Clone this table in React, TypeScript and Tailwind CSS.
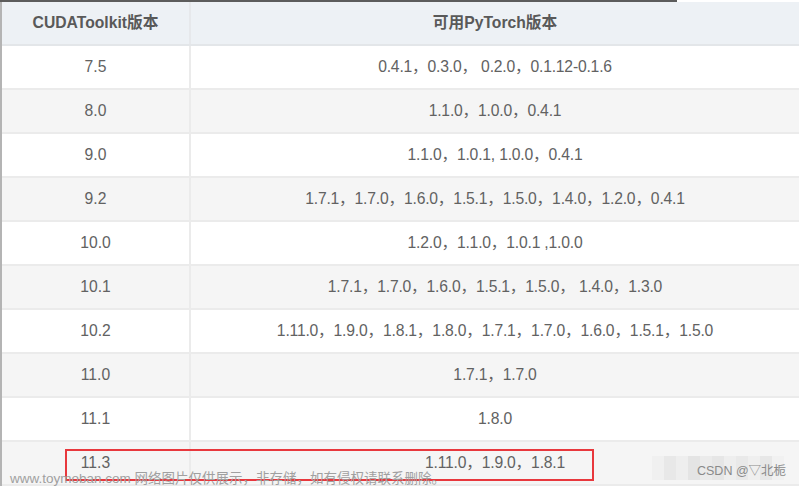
import React from "react";

const rows: { cuda: string; torch: string }[] = [
  { cuda: "7.5", torch: "0.4.1，0.3.0， 0.2.0，0.1.12-0.1.6" },
  { cuda: "8.0", torch: "1.1.0，1.0.0，0.4.1" },
  { cuda: "9.0", torch: "1.1.0，1.0.1, 1.0.0，0.4.1" },
  { cuda: "9.2", torch: "1.7.1，1.7.0，1.6.0，1.5.1，1.5.0，1.4.0，1.2.0，0.4.1" },
  { cuda: "10.0", torch: "1.2.0，1.1.0，1.0.1 ,1.0.0" },
  { cuda: "10.1", torch: "1.7.1，1.7.0，1.6.0，1.5.1，1.5.0， 1.4.0，1.3.0" },
  { cuda: "10.2", torch: "1.11.0，1.9.0，1.8.1，1.8.0，1.7.1，1.7.0，1.6.0，1.5.1，1.5.0" },
  { cuda: "11.0", torch: "1.7.1，1.7.0" },
  { cuda: "11.1", torch: "1.8.0" },
  { cuda: "11.3", torch: "1.11.0，1.9.0，1.8.1" },
];

export default function App() {
  return (
    <div
      className="relative w-[799px] h-[486px] overflow-hidden bg-white text-[#626262]"
      style={{ fontFamily: '"Liberation Sans", "Noto Sans CJK SC", sans-serif' }}
    >
      {/* top rule */}
      <div className="h-[2px] w-[677px] bg-[#5c5c5c]" />

      <div className="border-l-2 border-[#b4b4b4]">
        {/* header */}
        <div className="grid grid-cols-[189px_1fr] h-[44px] bg-[#edf1f5] border-b-2 border-[#e3e6e9] text-[15.7px] font-bold text-[#595959]">
          <div className="flex items-center justify-center border-r-2 border-[#e6e8eb]">CUDAToolkit版本</div>
          <div className="flex items-center justify-center">可用PyTorch版本</div>
        </div>

        {rows.map((r, i) => (
          <div
            key={r.cuda}
            className={`grid grid-cols-[189px_1fr] h-[44px] border-b-2 border-[#ebebeb] text-[15.7px] ${
              i % 2 === 1 ? "bg-[#f5f5f5]" : "bg-white"
            }`}
          >
            <div className="flex items-center justify-center border-r-2 border-[#ebebeb]">{r.cuda}</div>
            <div className="flex items-center justify-center whitespace-pre tracking-[-0.2px]">{r.torch}</div>
          </div>
        ))}
      </div>

      {/* highlight box */}
      <div className="absolute left-[65px] top-[449px] w-[529px] h-[32px] border-2 border-[#e8383d]" />

      {/* watermark */}
      <div className="absolute left-[10px] top-[469px] text-[13.5px] text-[#a0a0a0] whitespace-nowrap">
        www.toymoban.com 网络图片仅供展示，非存储，如有侵权请联系删除。
      </div>

      {/* csdn tag */}
      <div className="absolute left-[652px] top-[456px] h-[24px] w-[132px] flex">
        <div className="w-[12px] bg-[#f0f0f0]" />
        <div className="w-[12px] bg-[#e8e8e8]" />
        <div className="w-[12px] bg-[#eeeeee]" />
        <div className="w-[12px] bg-[#e4e4e4]" />
        <div className="w-[12px] bg-[#ebebeb]" />
        <div className="w-[12px] bg-[#e6e6e6]" />
        <div className="w-[12px] bg-[#eeeeee]" />
        <div className="w-[12px] bg-[#e9e9e9]" />
        <div className="w-[12px] bg-[#efefef]" />
        <div className="w-[12px] bg-[#e7e7e7]" />
        <div className="w-[12px] bg-[#f1f1f1]" />
      </div>
      <div className="absolute left-[697px] top-[462px] text-[12.5px] text-[#8a8a8a] whitespace-nowrap">
        CSDN @▽北栀
      </div>
    </div>
  );
}
